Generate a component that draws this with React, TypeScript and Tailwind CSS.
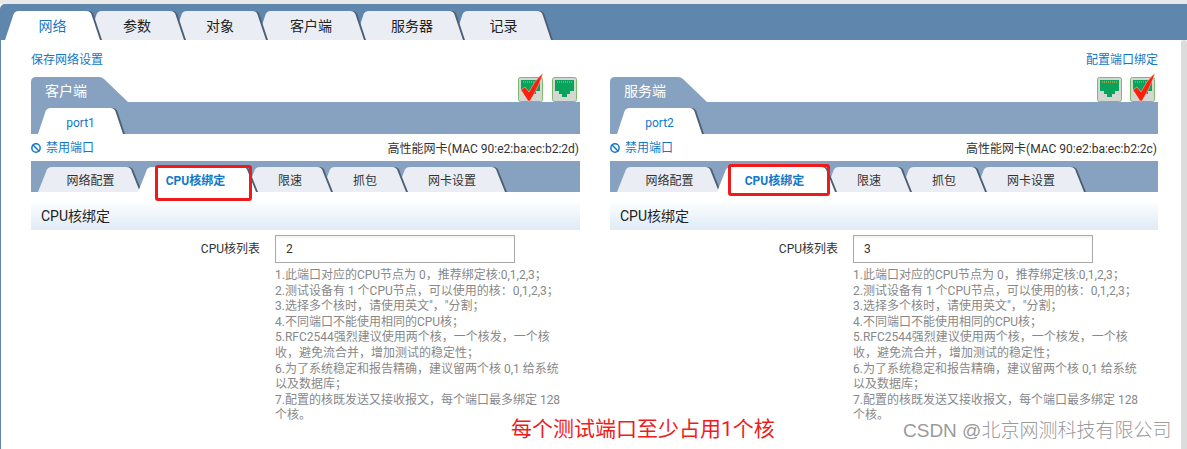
import React from 'react';
import { Ban } from 'lucide-react';

const mainTabs = [
  { label: '网络', w: 95, ml: 5, active: true, nudge: 'pt-[2px]' },
  { label: '参数', w: 96, ml: -12, nudge: 'pl-[2px] pt-[2px]' },
  { label: '对象', w: 93, ml: -11, nudge: 'pl-[1px] pt-[2px]' },
  { label: '客户端', w: 107, ml: -9, nudge: 'pl-[1px] pt-[2px]' },
  { label: '服务器', w: 108, ml: -9, nudge: 'pl-[6px] pt-[2px]' },
  { label: '记录', w: 97, ml: -9, nudge: 'pl-[2px] pt-[2px]' },
];

const subTabs = [
  { label: '网络配置', w: 102, ml: 7 },
  { label: 'CPU核绑定', w: 118, ml: -2, active: true },
  { label: '限速', w: 85, ml: -10 },
  { label: '抓包', w: 85, ml: -10 },
  { label: '网卡设置', w: 109, ml: -10 },
];

const tips = [
  '1.此端口对应的CPU节点为 0，推荐绑定核:0,1,2,3；',
  '2.测试设备有 1 个CPU节点，可以使用的核：0,1,2,3；',
  '3.选择多个核时，请使用英文"，"分割；',
  '4.不同端口不能使用相同的CPU核；',
  '5.RFC2544强烈建议使用两个核，一个核发，一个核收，避免流合并，增加测试的稳定性；',
  '6.为了系统稳定和报告精确，建议留两个核 0,1 给系统以及数据库；',
  '7.配置的核既发送又接收报文，每个端口最多绑定 128 个核。',
];

const tabPath = (w: number, h: number, s: number, r: number) =>
  `M0,${h} L${s - 2},${r + 1} Q${s - 1},0 ${s + r},0 L${w - s - r},0 Q${w - s + 1},0 ${w - s + 2},${r + 1} L${w},${h} Z`;

// trapezoid tab background, dark edge on the right side
const Tab = ({ w, h, label, active, ml, z, slant = 10, className }: { w: number; h: number; label: string; active?: boolean; ml: number; z: number; slant?: number; className: string }) => (
  <div className={`relative flex shrink-0 items-center justify-center ${className}`} style={{ width: w, height: h, marginLeft: ml, zIndex: active ? 20 : z }}>
    <svg className="absolute left-0 top-0 overflow-visible" width={w} height={h}>
      <path d={tabPath(w, h, slant, 4)} transform="translate(2,0)" fill="#4d5f73" />
      <path d={tabPath(w, h, slant, 4)} fill={active ? '#ffffff' : '#eaedf3'} />
    </svg>
    <span className="relative">{label}</span>
  </div>
);

const JackIcon = ({ checked }: { checked?: boolean }) => (
  <svg width="25" height="30" viewBox="0 0 25 30" className="overflow-visible">
    <rect x="0.5" y="5.5" width="24" height="24" rx="2" fill="#d4d6d2" stroke="#7fba6c" />
    <path d="M3 8h19v11h-4v3h-3v3h-5v-3H7v-3H3z" fill="#0aa35c" />
    <path d="M5 10h15" stroke="#b8a84c" strokeWidth="1.5" strokeDasharray="1 1" />
    {checked && (
      <path d="M3 18 L7 15 L11 20 Q16 9 25 1 Q22 12 12 29 L10 29 Z" fill="#fb1f0c" stroke="#ffffff" strokeWidth="0.4" />
    )}
  </svg>
);

const Panel = ({
  title,
  port,
  mac,
  value,
  widthClass,
  labelClass,
  gapClass,
  icons,
  redBox,
}: {
  title: string;
  port: string;
  mac: string;
  value: string;
  widthClass: string;
  labelClass: string;
  gapClass: string;
  icons: React.ReactNode;
  redBox: string;
}) => (
  <div className={`relative shrink-0 ${widthClass}`}>
    <div className="flex h-[25px] items-end justify-between">
      <div className="relative flex h-[25px] w-[97px] items-center pl-[14px] pt-[3px] text-[14px] text-white">
        <svg className="absolute left-0 top-0" width="97" height="25">
          <path d="M0,25 L0,5 Q0,0 5,0 L68,0 Q71,0 73,2 L97,25 Z" fill="#87a2c0" />
        </svg>
        <span className="relative">{title}</span>
      </div>
      <div className={`flex items-end pr-[3px] ${gapClass}`}>{icons}</div>
    </div>
    <div className="flex h-[32px] items-end bg-[#87a2c0]">
      <Tab w={85} h={26} label={port} active ml={7} z={1} slant={9} className="pt-[3px] font-['Roboto','Noto_Sans_CJK_SC',sans-serif] text-[12px] text-[#1278c8]" />
    </div>
    <div className="flex h-[27px] items-center justify-between pr-px text-[12px]">
      <div className="flex items-center gap-[5px] text-[#1278c8]">
        <Ban size={10} strokeWidth={3.5} />
        <span>禁用端口</span>
      </div>
      <div className="pt-[2px] text-[#333333]">{mac}</div>
    </div>
    <div className="flex h-[31px] items-end bg-[#87a2c0]">
      {subTabs.map((t, i) => (
        <Tab
          key={t.label}
          w={t.w}
          h={25}
          label={t.label}
          active={t.active}
          ml={t.ml}
          z={10 - i}
          className={t.active ? 'pr-[3px] pt-[3px] text-[12px] font-bold text-[#1278c8]' : 'pl-[3px] pt-[3px] text-[12px] text-[#333333]'}
        />
      ))}
    </div>
    <div className={`absolute z-30 rounded-[3px] border-[3px] border-[#f01a1a] ${redBox}`} />
    <div className="mt-[11px] flex h-[27px] items-center bg-gradient-to-b from-[#fbfdfe] to-[#dfebf6] pl-[10px] text-[14px] text-[#222222]">
      CPU核绑定
    </div>
    <div className="mt-[5px] flex">
      <div className={`flex h-[28px] shrink-0 items-center justify-end text-[12px] text-[#333333] ${labelClass}`}>CPU核列表</div>
      <div className="ml-[15px] w-[288px]">
        <div className="flex h-[28px] w-[240px] items-center border border-[#aaaaaa] pl-[10px] text-[12px] text-[#333333] shadow-[inset_0_2px_2px_rgba(0,0,0,0.05)]">
          {value}
        </div>
        <div className="mt-[5px] text-[12px] leading-[15.6px] text-[#888888]">
          {tips.map((t) => (
            <div key={t}>{t}</div>
          ))}
        </div>
      </div>
    </div>
  </div>
);

export default function App() {
  return (
    <div className="relative h-[449px] w-[1187px] overflow-hidden bg-white pt-[4px] font-['Roboto','Noto_Sans_CJK_SC',sans-serif]">
      <div className="absolute inset-x-0 top-0 h-[4px] bg-[#e9e9e9]" />
      <div className="flex h-[36px] items-end rounded-tl-[5px] bg-[#5f87ae] text-[14px] text-[#222222]">
        {mainTabs.map((t, i) => (
          <Tab
            key={t.label}
            w={t.w}
            h={29}
            label={t.label}
            active={t.active}
            ml={t.ml}
            z={10 - i}
            className={t.active ? `text-[#1278c8] ${t.nudge}` : `text-[#222222] ${t.nudge}`}
          />
        ))}
      </div>

      <div className="h-[409px] border-l border-[#5f87ae] pl-[30px] pt-[12px]">
        <div className="flex h-[25px] w-[1127px] justify-between text-[12px] leading-[16px] text-[#1278c8]">
          <span>保存网络设置</span>
          <span>配置端口绑定</span>
        </div>
        <div className="flex gap-[30px]">
          <Panel
            title="客户端"
            port="port1"
            mac="高性能网卡(MAC 90:e2:ba:ec:b2:2d)"
            value="2"
            widthClass="w-[549px]"
            labelClass="w-[229px]"
            gapClass="gap-[9px]"
            redBox="left-[124px] top-[88px] h-[36px] w-[97px]"
            icons={
              <>
                <JackIcon checked />
                <JackIcon />
              </>
            }
          />
          <Panel
            title="服务端"
            port="port2"
            mac="高性能网卡(MAC 90:e2:ba:ec:b2:2c)"
            value="3"
            widthClass="w-[548px]"
            labelClass="w-[228px]"
            gapClass="gap-[8px]"
            redBox="left-[118px] top-[87px] h-[32px] w-[102px]"
            icons={
              <>
                <JackIcon />
                <JackIcon checked />
              </>
            }
          />
        </div>
      </div>

      <div className="absolute bottom-0 right-0 top-[40px] w-[6px] rounded-t-[3px] bg-[#dcdcdc]" />
      <div className="absolute left-[511px] top-[414px] text-[21px] leading-[30px] text-[#f01c1c]">每个测试端口至少占用1个核</div>
      <div className="absolute left-[903px] top-[417px] font-['Liberation_Sans','Noto_Sans_CJK_SC',sans-serif] text-[19px] font-light leading-[28px] text-[#9a9a9a]">
        CSDN @北京网测科技有限公司
      </div>
    </div>
  );
}
